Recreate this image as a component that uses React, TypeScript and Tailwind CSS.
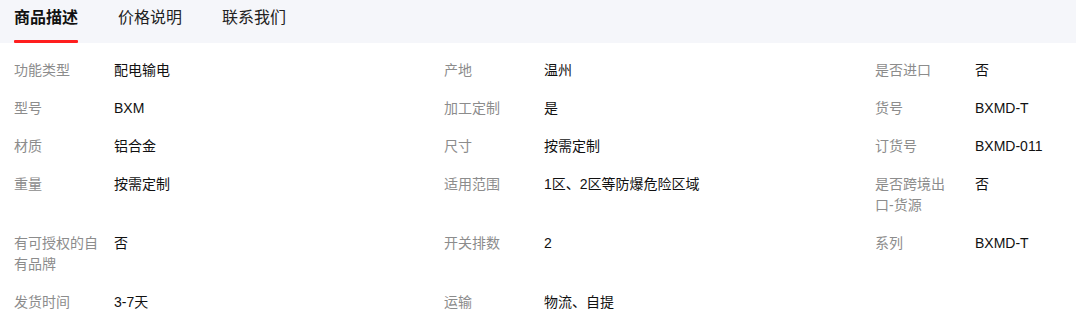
import React from "react";

type Cell = { label: string; value: string };

const rows: Cell[][] = [
  [
    { label: "功能类型", value: "配电输电" },
    { label: "产地", value: "温州" },
    { label: "是否进口", value: "否" },
  ],
  [
    { label: "型号", value: "BXM" },
    { label: "加工定制", value: "是" },
    { label: "货号", value: "BXMD-T" },
  ],
  [
    { label: "材质", value: "铝合金" },
    { label: "尺寸", value: "按需定制" },
    { label: "订货号", value: "BXMD-011" },
  ],
  [
    { label: "重量", value: "按需定制" },
    { label: "适用范围", value: "1区、2区等防爆危险区域" },
    { label: "是否跨境出口-货源", value: "否" },
  ],
  [
    { label: "有可授权的自有品牌", value: "否" },
    { label: "开关排数", value: "2" },
    { label: "系列", value: "BXMD-T" },
  ],
  [
    { label: "发货时间", value: "3-7天" },
    { label: "运输", value: "物流、自提" },
    { label: "", value: "" },
  ],
];

const tabs = ["商品描述", "价格说明", "联系我们"];

const labelCls = [
  "w-[90px] mr-[10px]",
  "w-[90px] mr-[10px]",
  "w-[76px] mr-[24px]",
];

export default function App() {
  return (
    <div
      className="w-[1076px] h-[319px] bg-white overflow-hidden"
      style={{ fontFamily: '"Liberation Sans", Arial, "Noto Sans CJK SC", sans-serif' }}
    >
      <div className="h-[43px] bg-[#f5f6fa] flex px-[14px] gap-[40px]">
        {tabs.map((t, i) => (
          <div
            key={t}
            className={
              "relative h-full pt-[6px] text-[16px] leading-[24px] " +
              (i === 0 ? "font-bold text-[#111]" : "text-[#222]")
            }
          >
            {t}
            {i === 0 && (
              <div className="absolute left-0 right-0 bottom-0 h-[3px] bg-[#ff1e1e] rounded-[1px]" />
            )}
          </div>
        ))}
      </div>
      <div className="pt-[8px] pl-[14px] grid grid-cols-[430px_431px_1fr] text-[14px] leading-[21px]">
        {rows.map((row, ri) =>
          row.map((c, ci) => (
            <div key={`${ri}-${ci}`} className="flex py-[8.5px]">
              <div className={`${labelCls[ci]} shrink-0 text-[#8c8c8c]`}>{c.label}</div>
              <div className="text-[#111]">{c.value}</div>
            </div>
          ))
        )}
      </div>
    </div>
  );
}
